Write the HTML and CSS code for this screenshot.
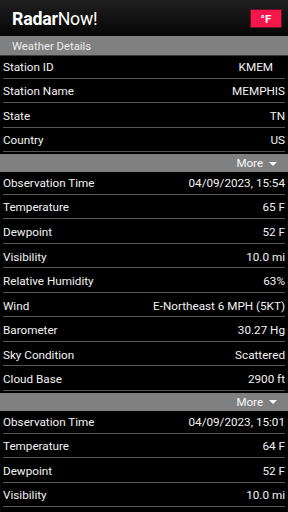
FILE: index.html
```html
<!DOCTYPE html>
<html>
<head>
<meta charset="utf-8">
<link rel="stylesheet" href="styles.css">
</head>
<body>
<div class="app">
  <header class="topbar">
    <div class="brand"><b>Radar</b>Now!</div>
    <div class="unit">°F</div>
  </header>
  <div class="section-title">Weather Details</div>
  <div class="list">
    <div class="row"><span>Station ID</span><span class="val val-id">KMEM</span></div>
    <div class="row"><span>Station Name</span><span class="val">MEMPHIS</span></div>
    <div class="row"><span>State</span><span class="val">TN</span></div>
    <div class="row"><span>Country</span><span class="val">US</span></div>
  </div>
  <div class="more-bar"><span>More</span><span class="caret"></span></div>
  <div class="list">
    <div class="row"><span>Observation Time</span><span class="val">04/09/2023, 15:54</span></div>
    <div class="row"><span>Temperature</span><span class="val">65 F</span></div>
    <div class="row"><span>Dewpoint</span><span class="val">52 F</span></div>
    <div class="row"><span>Visibility</span><span class="val">10.0 mi</span></div>
    <div class="row"><span>Relative Humidity</span><span class="val">63%</span></div>
    <div class="row"><span>Wind</span><span class="val">E-Northeast 6 MPH (5KT)</span></div>
    <div class="row"><span>Barometer</span><span class="val">30.27 Hg</span></div>
    <div class="row"><span>Sky Condition</span><span class="val">Scattered</span></div>
    <div class="row"><span>Cloud Base</span><span class="val">2900 ft</span></div>
  </div>
  <div class="more-bar"><span>More</span><span class="caret"></span></div>
  <div class="list">
    <div class="row"><span>Observation Time</span><span class="val">04/09/2023, 15:01</span></div>
    <div class="row"><span>Temperature</span><span class="val">64 F</span></div>
    <div class="row"><span>Dewpoint</span><span class="val">52 F</span></div>
    <div class="row"><span>Visibility</span><span class="val">10.0 mi</span></div>
  </div>
</div>
</body>
</html>
```
FILE: styles.css
```css
html, body {
  margin: 0;
  padding: 0;
  background: #000;
}
body {
  font-family: Roboto, "Liberation Sans", sans-serif;
  color: #f2f2f2;
  width: 288px;
  height: 512px;
  overflow: hidden;
}
.app {
  display: flex;
  flex-direction: column;
}
.topbar {
  height: 36px;
  display: flex;
  align-items: center;
  justify-content: space-between;
  padding: 0 7px 0 12px;
  background: linear-gradient(#1f1f1f, #060606);
}
.brand {
  font-size: 17.7px;
  color: #fff;
  letter-spacing: -0.2px;
  margin-top: 1px;
}
.brand b {
  font-weight: 700;
}
.unit {
  width: 30px;
  height: 17px;
  background: #f5164b;
  box-shadow: 0 0 0 1px #6a1025;
  color: #fff;
  font-weight: 700;
  font-size: 11.5px;
  display: flex;
  align-items: center;
  justify-content: center;
  margin-top: 1px;
}
.section-title {
  height: 18px;
  background: #808080;
  border-bottom: 1px solid #3a3a3a;
  display: flex;
  align-items: center;
  padding-left: 12px;
  padding-top: 1px;
  font-size: 11.3px;
  color: #ececec;
}
.list {
  display: flex;
  flex-direction: column;
}
.row {
  height: 21.65px;
  margin: 0 3px 1.9px;
  border-bottom: 1px solid #555;
  display: flex;
  align-items: center;
  justify-content: space-between;
  font-size: 11.7px;
}
.val-id {
  margin-right: 12px;
}
.more-bar {
  height: 18px;
  background: #808080;
  display: flex;
  align-items: center;
  justify-content: flex-end;
  padding-right: 11px;
  font-size: 11.5px;
  color: #fafafa;
  gap: 6px;
}
.caret {
  width: 0;
  height: 0;
  border-left: 4px solid transparent;
  border-right: 4px solid transparent;
  border-top: 4px solid #fafafa;
  margin-top: 1px;
}
```
